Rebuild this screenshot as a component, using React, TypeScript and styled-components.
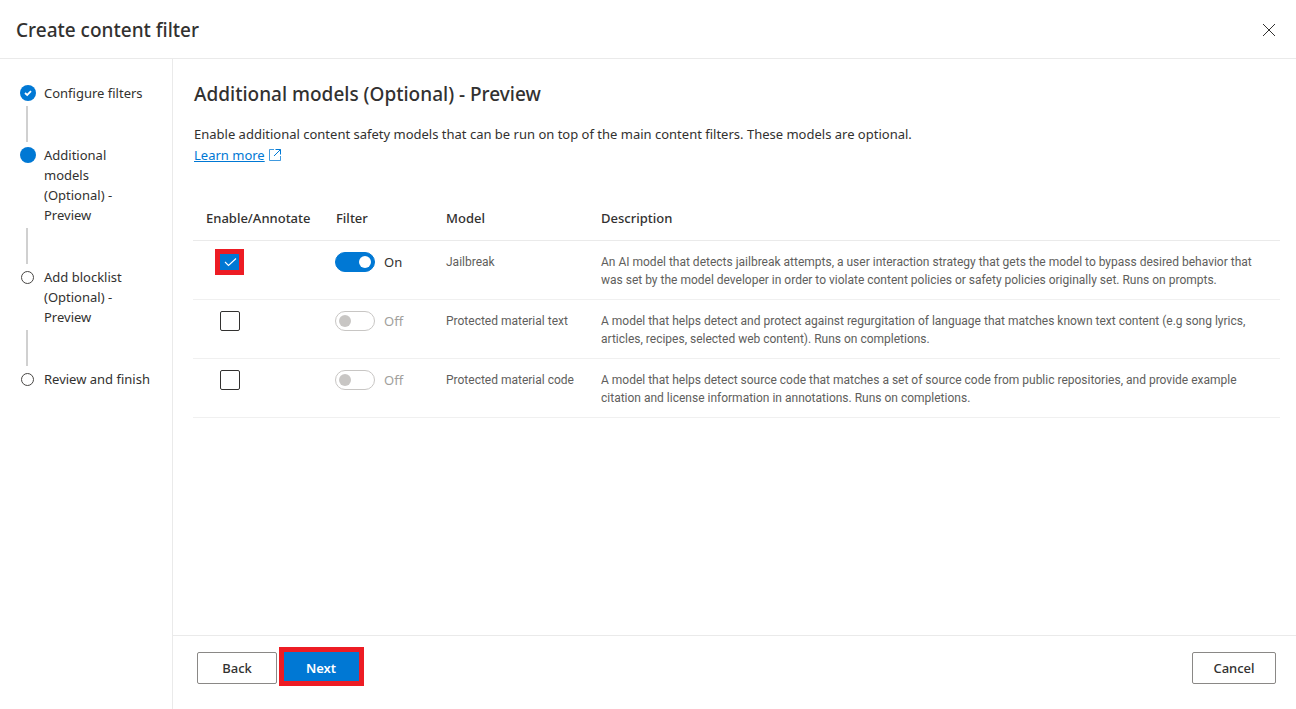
import React, { useState } from "react";
import styled, { createGlobalStyle, css } from "styled-components";

const GlobalStyle = createGlobalStyle`
  *, *::before, *::after { box-sizing: border-box; }
  body {
    margin: 0;
    background: #fff;
    color: #323130;
    font-family: "Noto Sans", "Open Sans", sans-serif;
    font-size: 13px;
    line-height: 20px;
  }
`;

const Page = styled.div`
  display: flex;
  flex-direction: column;
  min-height: 100vh;
`;

const Header = styled.header`
  display: flex;
  align-items: center;
  justify-content: space-between;
  padding: 17px 20px 15px 16px;
  border-bottom: 1px solid #eaeaea;
`;

const Title = styled.h1`
  margin: 0;
  font-size: 19px;
  font-weight: 500;
  line-height: 26px;
`;

const CloseButton = styled.button`
  display: flex;
  padding: 0;
  border: 0;
  background: none;
  color: #323130;
  cursor: pointer;
`;

const Body = styled.div`
  display: flex;
  flex: 1;
`;

const Sidebar = styled.nav`
  flex: 0 0 173px;
  padding: 24px 16px 24px 20px;
  border-right: 1px solid #eaeaea;
`;

const Steps = styled.ol`
  margin: 0;
  padding: 0;
  list-style: none;
`;

const Step = styled.li`
  display: grid;
  grid-template-columns: 16px 1fr;
  column-gap: 8px;

  &:not(:last-child)::after {
    content: "";
    grid-column: 1;
    width: 2px;
    height: 36px;
    margin: 3px 6px;
    background: #d0d0d0;
  }
`;

const StepIcon = styled.svg`
  width: 16px;
  height: 16px;
  margin-top: 2px;
`;

const StepLabel = styled.span`
  white-space: pre-line;
`;

const Main = styled.main`
  display: flex;
  flex: 1;
  flex-direction: column;
  min-width: 0;
`;

const Content = styled.section`
  flex: 1;
  padding: 22px 16px 22px 20px;
`;

const Heading = styled.h2`
  margin: 0 0 17px;
  padding-left: 1px;
  font-size: 19px;
  font-weight: 500;
  line-height: 26px;
`;

const Intro = styled.p`
  margin: 0 0 31px;
  padding-left: 1px;
  line-height: 21px;
`;

const Link = styled.a`
  display: flex;
  align-items: center;
  gap: 4px;
  width: fit-content;
  color: #0078d4;
`;

const Table = styled.table`
  width: 100%;
  border-collapse: collapse;
  table-layout: fixed;
  text-align: left;
`;

const HeadCell = styled.th<{ $width?: number }>`
  width: ${(p) => (p.$width ? `${p.$width}px` : "auto")};
  padding: 11px 12px 12px 13px;
  border-bottom: 1px solid #eaeaea;
  font-weight: 500;
  line-height: 20px;
  white-space: nowrap;
`;

const Cell = styled.td`
  padding: 11px 12px;
  border-bottom: 1px solid #f0f0f0;
  vertical-align: top;
`;

const TextCell = styled(Cell)`
  padding: 12px 12px 10px 13px;
  color: #605e5c;
  font-family: Roboto, "Noto Sans", sans-serif;
  font-size: 12px;
  line-height: 18px;
`;

const highlight = css`
  content: "";
  position: absolute;
  border: 5px solid #ed1c24;
  pointer-events: none;
`;

const CheckWrap = styled.span<{ $highlighted: boolean }>`
  position: relative;
  display: block;
  width: 20px;
  height: 20px;
  margin-left: 15px;

  ${(p) =>
    p.$highlighted &&
    css`
      &::after {
        ${highlight}
        inset: -3px -4px -3px -5px;
      }
    `}
`;

const CheckBox = styled.input`
  appearance: none;
  display: block;
  width: 20px;
  height: 20px;
  margin: 0;
  border: 1px solid #323130;
  border-radius: 2px;
  background: #fff;

  &:checked {
    border-color: #0078d4;
    background: #0078d4;
  }
`;

const CheckMark = styled.svg`
  position: absolute;
  inset: 0;
  pointer-events: none;
`;

const ToggleLabel = styled.label<{ $on: boolean }>`
  display: flex;
  align-items: center;
  gap: 9px;
  height: 20px;
  color: ${(p) => (p.$on ? "#323130" : "#a19f9d")};
`;

const Toggle = styled.input`
  appearance: none;
  display: flex;
  align-items: center;
  width: 40px;
  height: 20px;
  margin: 0;
  padding: 0 3px;
  border: 1px solid #c8c6c4;
  border-radius: 10px;
  background: #fff;

  &::before {
    content: "";
    width: 12px;
    height: 12px;
    border-radius: 50%;
    background: #c8c6c4;
  }

  &:checked {
    justify-content: flex-end;
    border-color: #0078d4;
    background: #0078d4;
  }

  &:checked::before {
    background: #fff;
  }
`;

const Footer = styled.footer`
  display: flex;
  gap: 4px;
  padding: 16px 20px 25px 24px;
  border-top: 1px solid #eaeaea;
`;

const Button = styled.button<{ $primary?: boolean; $end?: boolean }>`
  position: relative;
  min-width: ${(p) => (p.$end ? "84px" : "80px")};
  height: 32px;
  margin-left: ${(p) => (p.$end ? "auto" : "0")};
  padding: 0 16px;
  border: 1px solid #8a8886;
  border-radius: 2px;
  background: #fff;
  color: #323130;
  font: inherit;
  font-weight: 500;
  cursor: pointer;

  ${(p) =>
    p.$primary &&
    css`
      border-color: #0078d4;
      background: #0078d4;
      color: #fff;
      font-weight: 600;

      &::after {
        ${highlight}
        inset: -6px -4px -3px -3px;
      }
    `}
`;

type StepState = "done" | "current" | "todo";

const steps: { label: string; state: StepState }[] = [
  { label: "Configure filters", state: "done" },
  { label: "Additional\nmodels\n(Optional) -\nPreview", state: "current" },
  { label: "Add blocklist\n(Optional) -\nPreview", state: "todo" },
  { label: "Review and finish", state: "todo" },
];

const models = [
  {
    name: "Jailbreak",
    description:
      "An AI model that detects jailbreak attempts, a user interaction strategy that gets the model to bypass desired behavior that was set by the model developer in order to violate content policies or safety policies originally set. Runs on prompts.",
  },
  {
    name: "Protected material text",
    description:
      "A model that helps detect and protect against regurgitation of language that matches known text content (e.g song lyrics, articles, recipes, selected web content). Runs on completions.",
  },
  {
    name: "Protected material code",
    description:
      "A model that helps detect source code that matches a set of source code from public repositories, and provide example citation and license information in annotations. Runs on completions.",
  },
];

function StepMarker({ state }: { state: StepState }) {
  return (
    <StepIcon viewBox="0 0 16 16" aria-hidden="true">
      {state === "todo" ? (
        <circle cx="7.5" cy="8.5" r="6" fill="#fff" stroke="#484644" />
      ) : (
        <circle cx="8" cy="8" r="8" fill="#0078d4" />
      )}
      {state === "done" && (
        <path d="M5 8 7.2 10 11 6.2" fill="none" stroke="#fff" strokeWidth="1.8" />
      )}
    </StepIcon>
  );
}

function ModelRow({ name, description, initial }: { name: string; description: string; initial: boolean }) {
  const [enabled, setEnabled] = useState(initial);
  const [filter, setFilter] = useState(initial);
  return (
    <tr>
      <Cell>
        <CheckWrap $highlighted={initial}>
          <CheckBox
            type="checkbox"
            aria-label={`Enable ${name}`}
            checked={enabled}
            onChange={(e) => setEnabled(e.target.checked)}
          />
          {enabled && (
            <CheckMark width="20" height="20" viewBox="0 0 20 20" aria-hidden="true">
              <path d="M5 10 8.5 13.5 16 6.5" fill="none" stroke="#fff" strokeWidth="1.1" />
            </CheckMark>
          )}
        </CheckWrap>
      </Cell>
      <Cell>
        <ToggleLabel $on={filter}>
          <Toggle
            type="checkbox"
            role="switch"
            disabled={!enabled}
            checked={filter}
            onChange={(e) => setFilter(e.target.checked)}
          />
          {filter ? "On" : "Off"}
        </ToggleLabel>
      </Cell>
      <TextCell>{name}</TextCell>
      <TextCell>{description}</TextCell>
    </tr>
  );
}

export default function App() {
  return (
    <>
      <GlobalStyle />
      <Page>
        <Header>
          <Title>Create content filter</Title>
          <CloseButton aria-label="Close">
            <svg width="14" height="14" viewBox="0 0 14 14" aria-hidden="true">
              <path d="M1 1 13 13M13 1 1 13" stroke="currentColor" strokeWidth="1" />
            </svg>
          </CloseButton>
        </Header>
        <Body>
          <Sidebar aria-label="Steps">
            <Steps>
              {steps.map((step) => (
                <Step key={step.label} aria-current={step.state === "current" ? "step" : undefined}>
                  <StepMarker state={step.state} />
                  <StepLabel>{step.label}</StepLabel>
                </Step>
              ))}
            </Steps>
          </Sidebar>
          <Main>
            <Content>
              <Heading>Additional models (Optional) - Preview</Heading>
              <Intro>
                Enable additional content safety models that can be run on top of the main content filters. These
                models are optional.
                <Link href="#learn-more">
                  Learn more
                  <svg width="12" height="14" viewBox="0 0 12 14" fill="none" stroke="currentColor" aria-hidden="true">
                    <path d="M5 .5H.5v11h11V7" strokeOpacity="0.75" />
                    <path d="M6.5 .5h5v5M11.5 .5 5 7" />
                  </svg>
                </Link>
              </Intro>
              <Table>
                <thead>
                  <tr>
                    <HeadCell $width={130}>Enable/Annotate</HeadCell>
                    <HeadCell $width={110}>Filter</HeadCell>
                    <HeadCell $width={155}>Model</HeadCell>
                    <HeadCell>Description</HeadCell>
                  </tr>
                </thead>
                <tbody>
                  {models.map((model, index) => (
                    <ModelRow key={model.name} {...model} initial={index === 0} />
                  ))}
                </tbody>
              </Table>
            </Content>
            <Footer>
              <Button>Back</Button>
              <Button $primary>Next</Button>
              <Button $end>Cancel</Button>
            </Footer>
          </Main>
        </Body>
      </Page>
    </>
  );
}
